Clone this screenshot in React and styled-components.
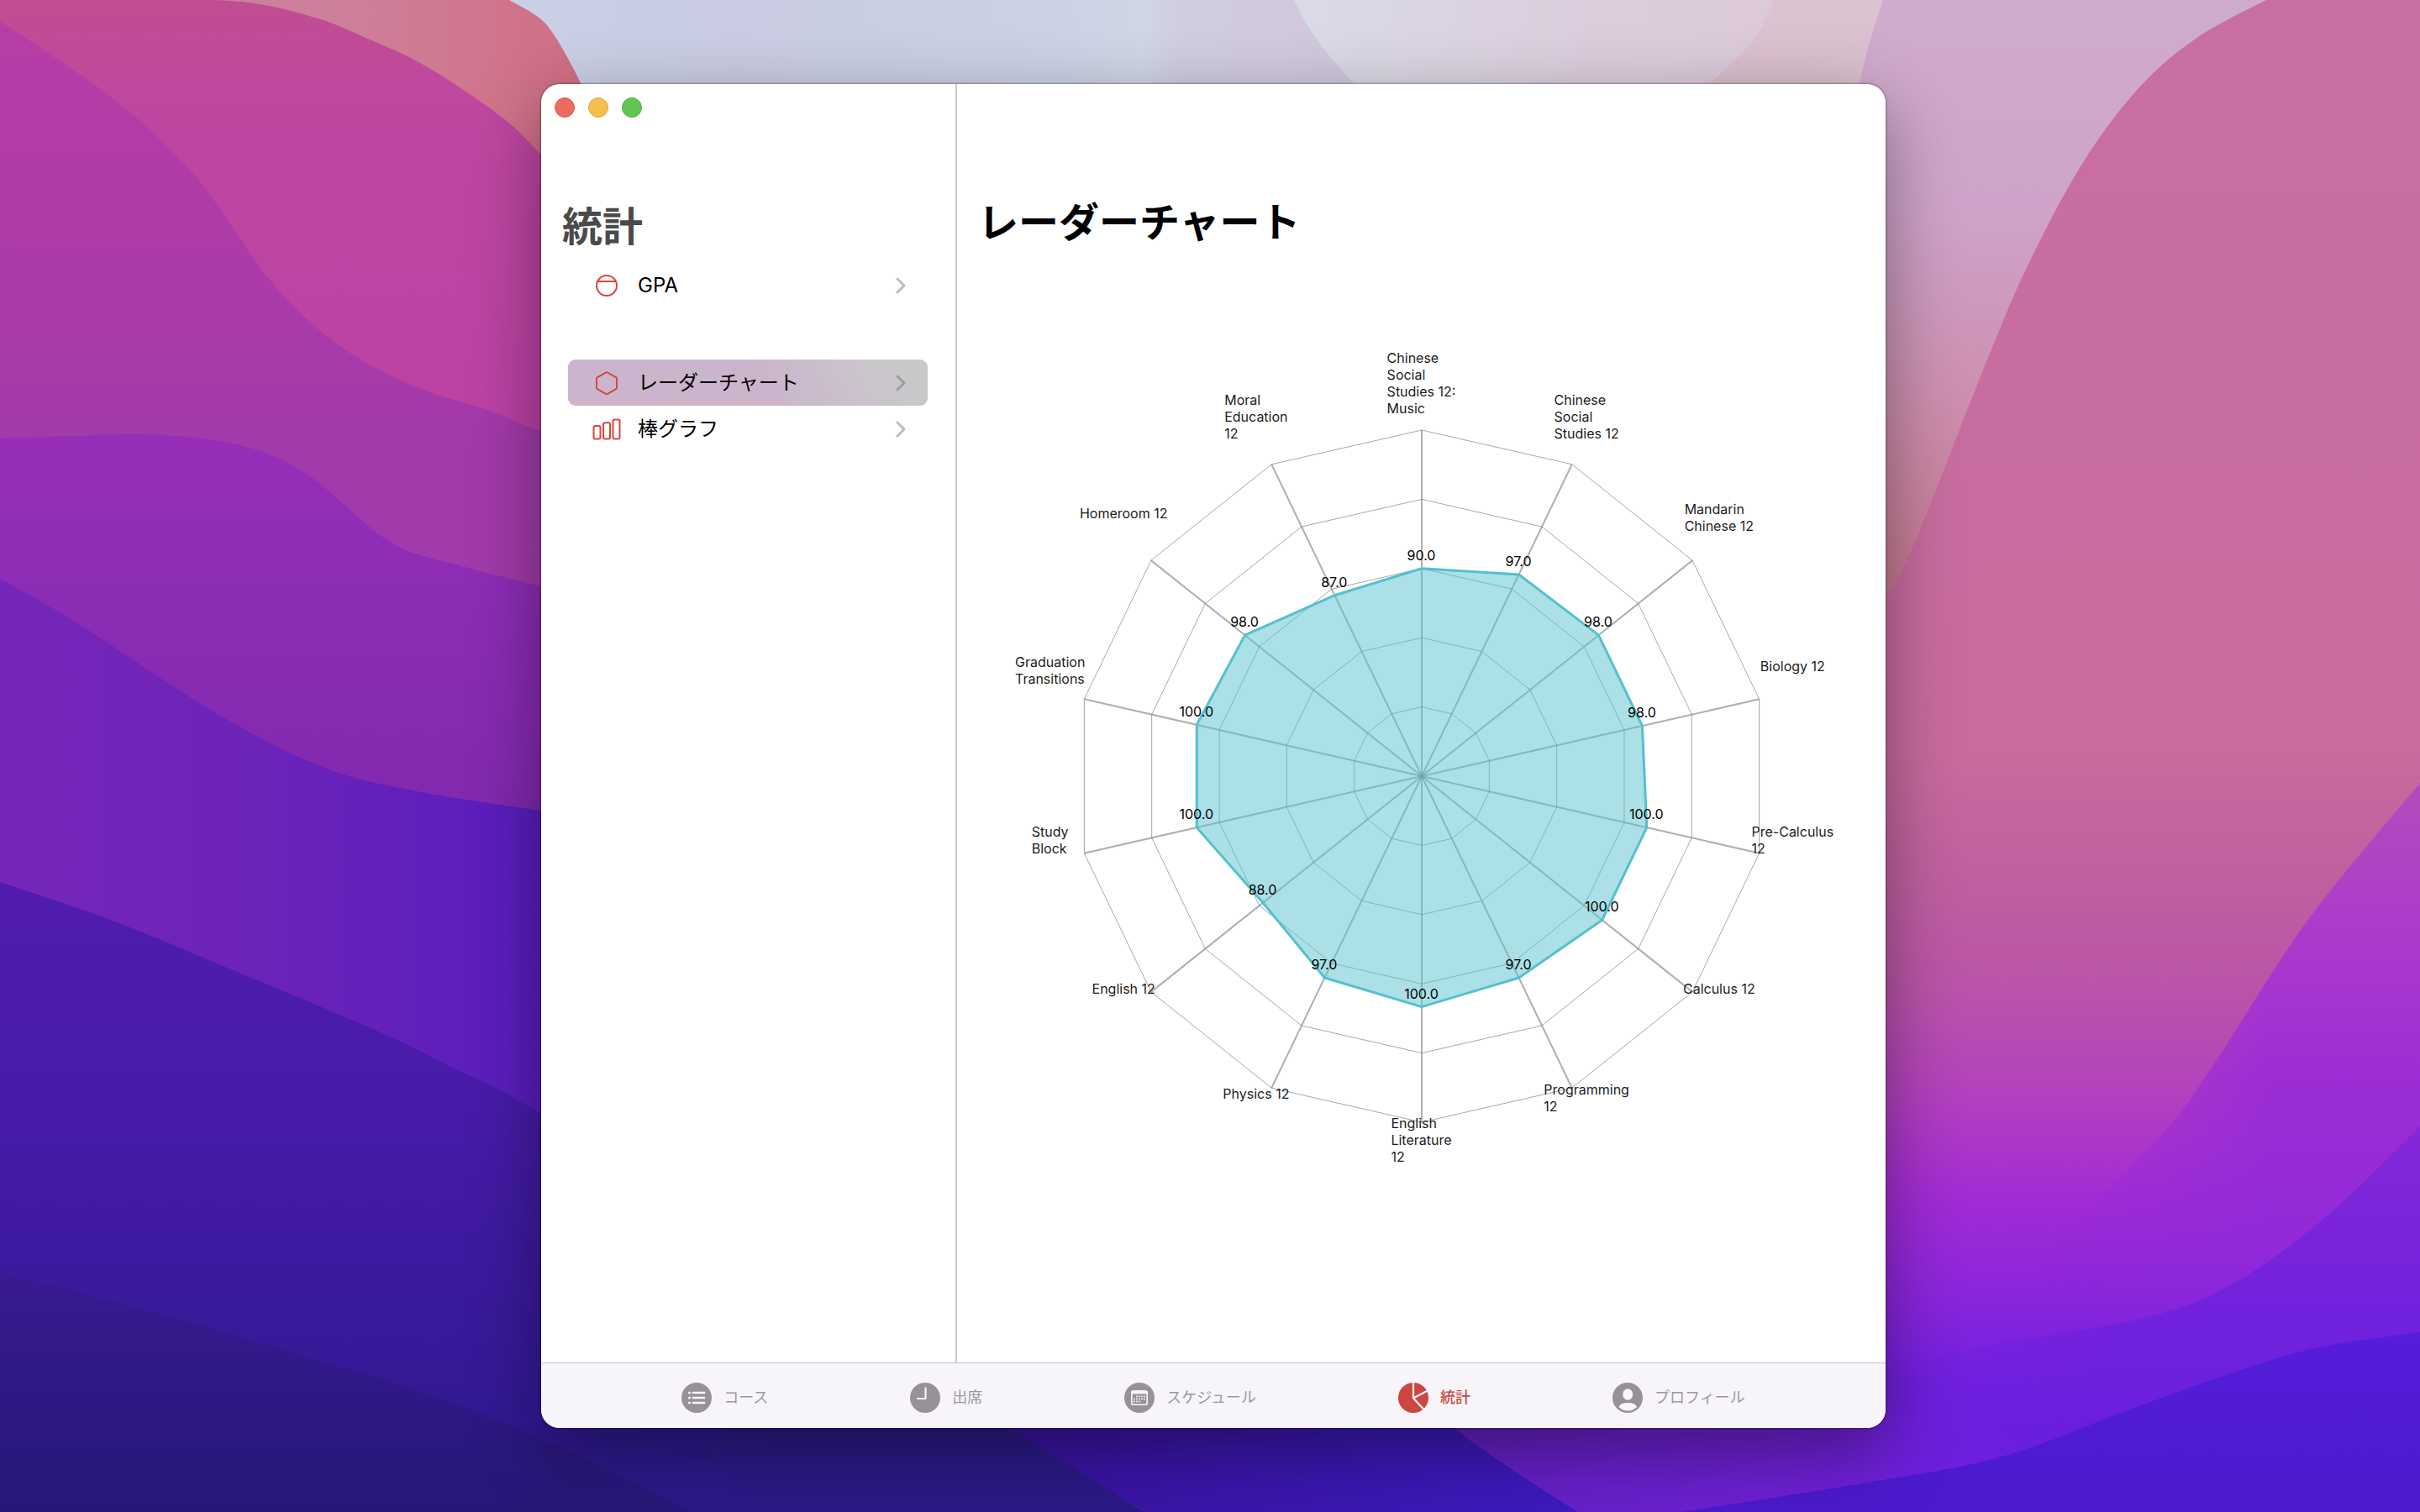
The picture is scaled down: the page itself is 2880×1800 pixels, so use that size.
import React from "react";
import styled, { createGlobalStyle } from "styled-components";

const fontStack = `Inter, "Noto Sans CJK JP", "Liberation Sans", sans-serif`;

const GlobalStyle = createGlobalStyle`
  *, *::before, *::after { box-sizing: border-box; }
  body { margin: 0; font-family: ${fontStack}; color: #000; background: #3a1a90; }
  button { font: inherit; color: inherit; border: 0; background: none; padding: 0; cursor: pointer; }
  h1, h2, ul { margin: 0; padding: 0; }
  ul { list-style: none; }
`;

/* ---------- Desktop ---------- */

const Desktop = styled.div`
  position: relative;
  display: grid;
  justify-items: center;
  min-height: 100vh;
  padding: 100px 32px 100px 40px;
  overflow: hidden;
`;

const WallpaperSvg = styled.svg`
  position: absolute;
  inset: 0;
  width: 100%;
  height: 100%;
`;

const gradients = [
  { id: "sky", stops: [["0", "#cbd0e6"], ["0.25", "#c9cce2"], ["0.6", "#ccd1e4"], ["0.69", "#d1d6e6"], ["0.73", "#d1cde1"], ["1", "#d2c4da"]], horizontal: true, from: 600, to: 1700 },
  { id: "skyPale", stops: [["0", "#dadae6"], ["0.5", "#dccddd"], ["1", "#dcc8d8"]], horizontal: true, from: 1550, to: 2240 },
  { id: "skyRose", stops: [["0", "#dcc3d2"], ["1", "#d9bfcb"]], from: 0, to: 100 },
  { id: "skyMauve", stops: [["0", "#cfacce"], ["0.35", "#cfa3c9"], ["0.65", "#cd8fb0"], ["1", "#c4788e"]], from: 0, to: 720 },
  { id: "crest", stops: [["0", "#ca809f"], ["0.45", "#cf7f9a"], ["1", "#d06f84"]], horizontal: true, from: 200, to: 690 },
  { id: "l1", stops: [["0", "#c14d92"], ["0.25", "#bf47a0"], ["1", "#bb42a4"]], from: 0, to: 500 },
  { id: "l2", stops: [["0", "#b83da6"], ["0.4", "#ac3ba8"], ["0.75", "#a23aaa"], ["1", "#a13aab"]], from: 20, to: 700 },
  { id: "l3", stops: [["0", "#962eb8"], ["0.5", "#8b2cb4"], ["1", "#8129af"]], from: 520, to: 960 },
  { id: "l4", stops: [["0", "#7627b9"], ["0.45", "#6c23b8"], ["1", "#561cbf"]], horizontal: true, from: 0, to: 680 },
  { id: "l5", stops: [["0", "#511cae"], ["0.4", "#461ba8"], ["1", "#2f1891"]], from: 1050, to: 1740 },
  { id: "l6", stops: [["0", "#3b1a92"], ["0.5", "#2f1885"], ["1", "#261877"]], from: 1500, to: 1800 },
  { id: "b2", stops: [["0", "#3a139f"], ["1", "#3c1abf"]], horizontal: true, from: 1200, to: 1877 },
  { id: "b3", stops: [["0", "#6420c4"], ["0.6", "#6e20d4"], ["1", "#701fe0"]], horizontal: true, from: 1731, to: 2400 },
  { id: "r1", stops: [["0", "#c86fa3"], ["0.5", "#c86b9d"], ["0.58", "#c0609f"], ["0.66", "#b953aa"], ["0.73", "#b13fc0"], ["0.79", "#a22cd4"], ["0.86", "#8925dc"], ["0.92", "#6f1fdf"], ["1", "#651ddc"]], from: 0, to: 1800 },
  { id: "r2", stops: [["0", "#b24dba"], ["0.25", "#ac3bcc"], ["0.5", "#9c2dd4"], ["0.8", "#9029d9"], ["1", "#7a22dd"]], from: 930, to: 1640 },
  { id: "r3", stops: [["0", "#8428d8"], ["0.5", "#7222dc"], ["1", "#671edd"]], from: 1340, to: 1760 },
  { id: "r4", stops: [["0", "#561ddb"], ["1", "#4a1acb"]], from: 1586, to: 1800 },
];

/* Each layer is a smooth crest line closed off by straight edges. */
const layers = [
  { fill: "sky", crest: [[0, 0], [2880, 0]], close: "V1800H0Z" },
  { fill: "skyPale", crest: [[1540, 0], [1556, 30], [1580, 64], [1612, 100], [1640, 130]], close: "H2260V0Z" },
  { fill: "skyRose", crest: [[2111, 0], [2092, 40], [2064, 72], [2034, 100], [2005, 130]], close: "H2260V0Z" },
  { fill: "skyMauve", crest: [[2241, 0], [2228, 40], [2213, 98], [2195, 180]], close: "V800H2500L2880 0Z" },
  { fill: "crest", crest: [[606, 0], [640, 20], [661, 44], [691, 99], [710, 150]], close: "V300H0V0Z" },
  { fill: "l1", crest: [[0, 0], [165, 0], [286, 2], [375, 21], [440, 47], [509, 80], [598, 140], [644, 184], [690, 230]], close: "V700H0Z" },
  { fill: "l2", crest: [[0, 25], [134, 117], [232, 209], [321, 333], [402, 410], [491, 459], [580, 488], [644, 514], [760, 560]], close: "V900H0Z" },
  { fill: "l3", crest: [[0, 522], [90, 519], [179, 517], [286, 530], [366, 565], [464, 645], [550, 674], [644, 698], [760, 730]], close: "V1100H0Z" },
  { fill: "l4", crest: [[0, 689], [89, 740], [259, 850], [384, 913], [491, 941], [644, 965], [760, 980]], close: "V1500H0Z" },
  { fill: "l5", crest: [[0, 1050], [134, 1096], [268, 1151], [446, 1226], [545, 1274], [644, 1326], [1000, 1550], [1200, 1700], [1363, 1800]], close: "H0Z" },
  { fill: "r1", crest: [[2697, 0], [2616, 44], [2547, 103], [2478, 195], [2408, 327], [2347, 473], [2287, 626], [2245, 714], [2200, 790]], close: "L1700 1800H2880V0Z" },
  { fill: "b2", crest: [[1000, 1550], [1200, 1700], [1363, 1800]], close: "H2000V1550Z" },
  { fill: "b3", crest: [[1640, 1600], [1731, 1700], [1877, 1800]], close: "H2500L2300 1640Z" },
  { fill: "r2", crest: [[2880, 932], [2746, 1096], [2634, 1268], [2569, 1355], [2440, 1480], [2300, 1560]], close: "V1640H2880Z", mask: "fadeUpper" },
  { fill: "r3", crest: [[2880, 1341], [2764, 1452], [2651, 1532], [2547, 1570], [2373, 1601], [2245, 1630]], close: "L2000 1800H2880Z", mask: "fadeLower" },
  { fill: "r4", crest: [[2880, 1586], [2738, 1609], [2556, 1670], [2386, 1733], [2222, 1765], [2000, 1800]], close: "H2880Z" },
  { fill: "l6", crest: [[0, 1515], [179, 1561], [366, 1616], [509, 1659], [625, 1705], [700, 1739], [824, 1800]], close: "H0Z" },
];

const smooth = (points) => {
  let d = `M${points[0][0]} ${points[0][1]}`;
  for (let i = 0; i < points.length - 1; i += 1) {
    const before = points[i - 1] ?? points[i];
    const from = points[i];
    const to = points[i + 1];
    const after = points[i + 2] ?? to;
    const c1 = [0, 1].map((k) => from[k] + (to[k] - before[k]) / 6);
    const c2 = [0, 1].map((k) => to[k] - (after[k] - from[k]) / 6);
    d += `C${[...c1, ...c2, ...to].map((n) => n.toFixed(1)).join(" ")}`;
  }
  return d;
};

const fades = [
  { id: "fadeUpper", from: 2430, to: 2700 },
  { id: "fadeLower", from: 2250, to: 2520 },
];

function Wallpaper() {
  return (
    <WallpaperSvg viewBox="0 0 2880 1800" preserveAspectRatio="xMidYMid slice" aria-hidden="true">
      <defs>
        {gradients.map(({ id, stops, horizontal, from, to }) => (
          <linearGradient
            key={id}
            id={id}
            gradientUnits="userSpaceOnUse"
            x1={horizontal ? from : 0}
            x2={horizontal ? to : 0}
            y1={horizontal ? 0 : from}
            y2={horizontal ? 0 : to}
          >
            {stops.map(([offset, color]) => (
              <stop key={offset} offset={offset} stopColor={color} />
            ))}
          </linearGradient>
        ))}
        {fades.map(({ id, from, to }) => (
          <React.Fragment key={id}>
            <linearGradient id={`${id}Ramp`} gradientUnits="userSpaceOnUse" x1={from} x2={to} y1="0" y2="0">
              <stop offset="0" stopColor="#000" />
              <stop offset="1" stopColor="#fff" />
            </linearGradient>
            <mask id={id} maskUnits="userSpaceOnUse" x="0" y="0" width="2880" height="1800">
              <rect width="2880" height="1800" fill={`url(#${id}Ramp)`} />
            </mask>
          </React.Fragment>
        ))}
        <linearGradient id="dusk" gradientUnits="userSpaceOnUse" x1="644" y1="0" x2="1363" y2="0">
          <stop offset="0" stopColor="#2b1a86" stopOpacity="0" />
          <stop offset="0.4" stopColor="#2b1a86" stopOpacity="1" />
        </linearGradient>
      </defs>
      {layers.map(({ fill, crest, close, mask }) => (
        <path
          key={fill}
          d={smooth(crest) + close}
          fill={`url(#${fill})`}
          mask={mask ? `url(#${mask})` : undefined}
        />
      ))}
      <path d="M644 1600H1067L1200 1700L1363 1800H824L700 1739L644 1712Z" fill="url(#dusk)" />
    </WallpaperSvg>
  );
}

/* ---------- Window ---------- */

const AppWindow = styled.main`
  position: relative;
  display: flex;
  flex-direction: column;
  width: min(1600px, 100%);
  border-radius: 22px;
  background: #fff;
  overflow: hidden;
  box-shadow: 0 0 2px 1px rgba(0, 0, 0, 0.3), 0 28px 84px rgba(0, 0, 0, 0.4);
`;

const Panes = styled.div`
  display: flex;
  flex: 1;
`;

const Sidebar = styled.aside`
  flex: 0 0 495px;
  border-right: 2px solid #c8c8c8;
  padding: 16px 33px 32px 32px;
`;

const WindowControls = styled.div`
  display: flex;
  gap: 16px;
  margin-left: -16px;
`;

const ControlDot = styled.button`
  width: 24px;
  height: 24px;
  border-radius: 50%;
  background: ${(p) => p.$fill};
  border: 1px solid ${(p) => p.$edge};
`;

const SidebarTitle = styled.h1`
  margin: 100px 0 12px -7px;
  font-size: 48px;
  line-height: 60px;
  font-weight: 700;
  color: #4a4a4a;
`;

const NavGroup = styled.ul`
  & + & {
    margin-top: 61px;
  }
`;

const NavRow = styled.button`
  display: flex;
  align-items: center;
  gap: 19px;
  width: 100%;
  height: 55px;
  padding: 0 26px 0 28px;
  border-radius: 9px;
  font-size: 24px;
  line-height: 32px;
  text-align: left;
  background: ${(p) =>
    p.$selected ? "linear-gradient(60deg, #cbb5cc 55%, #cbc4cc 80%, #c9c8c9 92%)" : "transparent"};
  color: #000;

  svg:last-child {
    color: ${(p) => (p.$selected ? "#a09ca3" : "#bdbdbd")};
  }
`;

const RowLabel = styled.span`
  flex: 1;
`;

const Detail = styled.section`
  flex: 1;
  min-width: 0;
  padding: 135px 25px 96px;
`;

const DetailTitle = styled.h2`
  font-size: 48px;
  line-height: 60px;
  font-weight: 700;
`;

/* ---------- Icons ---------- */

const RowIcon = styled.svg`
  width: 36px;
  height: 36px;
  flex: none;
  fill: none;
  stroke: #d8453f;
  stroke-width: 2;
  stroke-linejoin: round;
`;

const ChevronSvg = styled.svg`
  width: 12px;
  height: 20px;
  flex: none;
  fill: none;
  stroke: currentColor;
  stroke-width: 3;
  stroke-linecap: round;
  stroke-linejoin: round;
`;

const GpaIcon = () => (
  <RowIcon viewBox="0 0 36 36" aria-hidden="true">
    <circle cx="18" cy="18" r="12" />
    <path d="M7.500 13H28.500" />
  </RowIcon>
);

const RadarIcon = () => (
  <RowIcon viewBox="0 0 36 36" aria-hidden="true">
    <path d="M18 5.200Q18.600 5.200 19.200 5.600L29 11.200Q30 11.800 30 13V23.500Q30 24.600 29 25.200L19.200 30.800Q18 31.400 16.800 30.800L7 25.200Q6 24.600 6 23.500V13Q6 11.800 7 11.200L16.800 5.600Q17.400 5.200 18 5.200Z" />
  </RowIcon>
);

const BarsIcon = () => (
  <RowIcon viewBox="0 0 36 36" aria-hidden="true">
    <rect x="2.500" y="14" width="8" height="15.500" rx="2" />
    <rect x="14" y="10.300" width="8" height="19.200" rx="2" />
    <rect x="25.500" y="6.500" width="8" height="23" rx="2" />
  </RowIcon>
);

const Chevron = () => (
  <ChevronSvg viewBox="0 0 12 20" aria-hidden="true">
    <path d="M2 2L10 10L2 18" />
  </ChevronSvg>
);

const TabSvg = styled.svg`
  width: 36px;
  height: 36px;
  flex: none;
`;

const disc = "#979199";
const paper = "#f7f5fa";

const CoursesIcon = () => (
  <TabSvg viewBox="0 0 36 36" aria-hidden="true">
    <circle cx="18" cy="18" r="18" fill={disc} />
    <g fill={paper}>
      {[12, 18, 24].map((y) => (
        <g key={y}>
          <circle cx="9.500" cy={y} r="1.500" />
          <rect x="12.500" y={y - 1.2} width="16" height="2.400" rx="1.200" />
        </g>
      ))}
    </g>
  </TabSvg>
);

const ClockIcon = () => (
  <TabSvg viewBox="0 0 36 36" aria-hidden="true">
    <circle cx="18" cy="18" r="18" fill={disc} />
    <path d="M18.500 6.500V19H9" fill="none" stroke={paper} strokeWidth="2.200" strokeLinecap="round" strokeLinejoin="round" />
  </TabSvg>
);

const CalendarIcon = () => (
  <TabSvg viewBox="0 0 36 36" aria-hidden="true">
    <circle cx="18" cy="18" r="18" fill={disc} />
    <rect x="8.800" y="10" width="18.400" height="16.300" rx="2.400" fill="none" stroke={paper} strokeWidth="1.600" />
    <path d="M8 13.500V12Q8 9.200 10.800 9.200H25.200Q28 9.200 28 12V13.500Z" fill={paper} />
    <g fill={paper}>
      {[
        [16, 16.5], [19, 16.5], [22, 16.5], [25, 16.5],
        [13, 19.5], [16, 19.5], [19, 19.5], [22, 19.5], [25, 19.5],
        [13, 22.5], [16, 22.5], [19, 22.5],
      ].map(([x, y]) => (
        <rect key={`${x}-${y}`} x={x - 2} y={y - 1} width="1.800" height="1.800" rx="0.400" />
      ))}
    </g>
  </TabSvg>
);

const PieIcon = () => (
  <TabSvg viewBox="0 0 36 36" aria-hidden="true">
    <circle cx="18" cy="18" r="18" fill="#cc4642" />
    <path d="M18 -1V18.500L36 9M18 18.500L31.500 33" fill="none" stroke={paper} strokeWidth="2.200" strokeLinejoin="round" />
  </TabSvg>
);

const ProfileIcon = () => (
  <TabSvg viewBox="0 0 36 36" aria-hidden="true">
    <circle cx="18" cy="18" r="18" fill={disc} />
    <ellipse cx="18.200" cy="14" rx="6" ry="6.800" fill={paper} />
    <path d="M7.500 29Q9 24 18.200 24Q27.400 24 29 29Q24.500 33.500 18.200 33.500Q12 33.500 7.500 29Z" fill={paper} />
  </TabSvg>
);

/* ---------- Tab bar ---------- */

const TabBar = styled.nav`
  display: flex;
  justify-content: center;
  gap: 169px;
  padding: 23px 16px 18px;
  border-top: 1px solid #c4c2c6;
  background: ${paper};
`;

const Tab = styled.button`
  display: flex;
  align-items: center;
  gap: 14px;
  font-size: 18px;
  line-height: 28px;
  white-space: nowrap;
  color: ${(p) => (p.$active ? "#cc4642" : "#9b979d")};
  font-weight: ${(p) => (p.$active ? 500 : 400)};
`;

/* ---------- Radar chart ---------- */

const RADIUS = 412;
const MAX = 150;
const RINGS = 5;
const LABEL_RADIUS = RADIUS * 1.1;
const WIDTH = 1040;
const HEIGHT = 1000;

const courses = [
  { lines: ["Chinese", "Social", "Studies 12:", "Music"], value: 90 },
  { lines: ["Chinese", "Social", "Studies 12"], value: 97 },
  { lines: ["Mandarin", "Chinese 12"], value: 98 },
  { lines: ["Biology 12"], value: 98 },
  { lines: ["Pre-Calculus", "12"], value: 100 },
  { lines: ["Calculus 12"], value: 100 },
  { lines: ["Programming", "12"], value: 97 },
  { lines: ["English", "Literature", "12"], value: 100 },
  { lines: ["Physics 12"], value: 97 },
  { lines: ["English 12"], value: 88 },
  { lines: ["Study", "Block"], value: 100 },
  { lines: ["Graduation", "Transitions"], value: 100 },
  { lines: ["Homeroom 12"], value: 98 },
  { lines: ["Moral", "Education", "12"], value: 87 },
];

const Chart = styled.figure`
  position: relative;
  width: ${WIDTH}px;
  height: ${HEIGHT}px;
  margin: 129px auto 0;
`;

const ChartSvg = styled.svg`
  display: block;
  width: 100%;
  height: 100%;
`;

const Ring = styled.polygon`
  fill: none;
  stroke: #6e6e6e;
  stroke-opacity: 0.6;
  stroke-width: 1;
`;

const Axis = styled.line`
  stroke: #7a7a7a;
  stroke-opacity: 0.6;
  stroke-width: 2;
`;

const DataArea = styled.polygon`
  fill: #57c2cd;
  fill-opacity: 0.5;
  stroke: #54c1ce;
  stroke-width: 3;
  stroke-linejoin: round;
`;

const ChartText = styled.span`
  position: absolute;
  transform: translate(-50%, ${(p) => (p.$above ? "-100%" : "0")});
  font-size: 16px;
  line-height: 20px;
  white-space: pre;
  color: ${(p) => (p.$above ? "#000" : "#1c1c1c")};
`;

const pointAt = (index, radius) => {
  const angle = (index / courses.length) * Math.PI * 2;
  return [WIDTH / 2 + radius * Math.sin(angle), HEIGHT / 2 - radius * Math.cos(angle)];
};

const polygon = (radiusOf) =>
  courses.map((course, i) => pointAt(i, radiusOf(course)).map((n) => n.toFixed(2)).join(",")).join(" ");

function RadarChart() {
  return (
    <Chart>
      <ChartSvg viewBox={`0 0 ${WIDTH} ${HEIGHT}`} role="img" aria-label="レーダーチャート">
        {Array.from({ length: RINGS }, (_, r) => (
          <Ring key={r} points={polygon(() => (RADIUS * (r + 1)) / RINGS)} />
        ))}
        {courses.map((_, i) => {
          const [x, y] = pointAt(i, RADIUS);
          return <Axis key={i} x1={WIDTH / 2} y1={HEIGHT / 2} x2={x} y2={y} />;
        })}
        <DataArea points={polygon((course) => (RADIUS * course.value) / MAX)} />
      </ChartSvg>
      {courses.map(({ lines, value }, i) => {
        const [labelX, labelY] = pointAt(i, LABEL_RADIUS);
        const [valueX, valueY] = pointAt(i, (RADIUS * value) / MAX);
        return (
          <React.Fragment key={i}>
            <ChartText style={{ left: labelX, top: labelY - 35 - 5 * lines.length }}>
              {lines.join("\n")}
            </ChartText>
            <ChartText $above style={{ left: valueX, top: valueY - 6 }}>
              {value.toFixed(1)}
            </ChartText>
          </React.Fragment>
        );
      })}
    </Chart>
  );
}

/* ---------- App ---------- */

const navGroups = [
  [{ label: "GPA", Icon: GpaIcon }],
  [
    { label: "レーダーチャート", Icon: RadarIcon, selected: true },
    { label: "棒グラフ", Icon: BarsIcon },
  ],
];

const tabs = [
  { label: "コース", Icon: CoursesIcon },
  { label: "出席", Icon: ClockIcon },
  { label: "スケジュール", Icon: CalendarIcon },
  { label: "統計", Icon: PieIcon, active: true },
  { label: "プロフィール", Icon: ProfileIcon },
];

export default function App() {
  return (
    <>
      <GlobalStyle />
      <Desktop lang="ja">
        <Wallpaper />
        <AppWindow>
          <Panes>
            <Sidebar>
              <WindowControls>
                <ControlDot aria-label="閉じる" $fill="#ec6a5e" $edge="#dd5a4f" />
                <ControlDot aria-label="しまう" $fill="#f5bf4f" $edge="#dfa63b" />
                <ControlDot aria-label="拡大" $fill="#61c554" $edge="#4fb043" />
              </WindowControls>
              <SidebarTitle>統計</SidebarTitle>
              <nav>
                {navGroups.map((items, g) => (
                  <NavGroup key={g}>
                    {items.map(({ label, Icon, selected }) => (
                      <li key={label}>
                        <NavRow $selected={selected} aria-current={selected ? "page" : undefined}>
                          <Icon />
                          <RowLabel>{label}</RowLabel>
                          <Chevron />
                        </NavRow>
                      </li>
                    ))}
                  </NavGroup>
                ))}
              </nav>
            </Sidebar>
            <Detail>
              <DetailTitle>レーダーチャート</DetailTitle>
              <RadarChart />
            </Detail>
          </Panes>
          <TabBar>
            {tabs.map(({ label, Icon, active }) => (
              <Tab key={label} $active={active} aria-current={active ? "page" : undefined}>
                <Icon />
                {label}
              </Tab>
            ))}
          </TabBar>
        </AppWindow>
      </Desktop>
    </>
  );
}
